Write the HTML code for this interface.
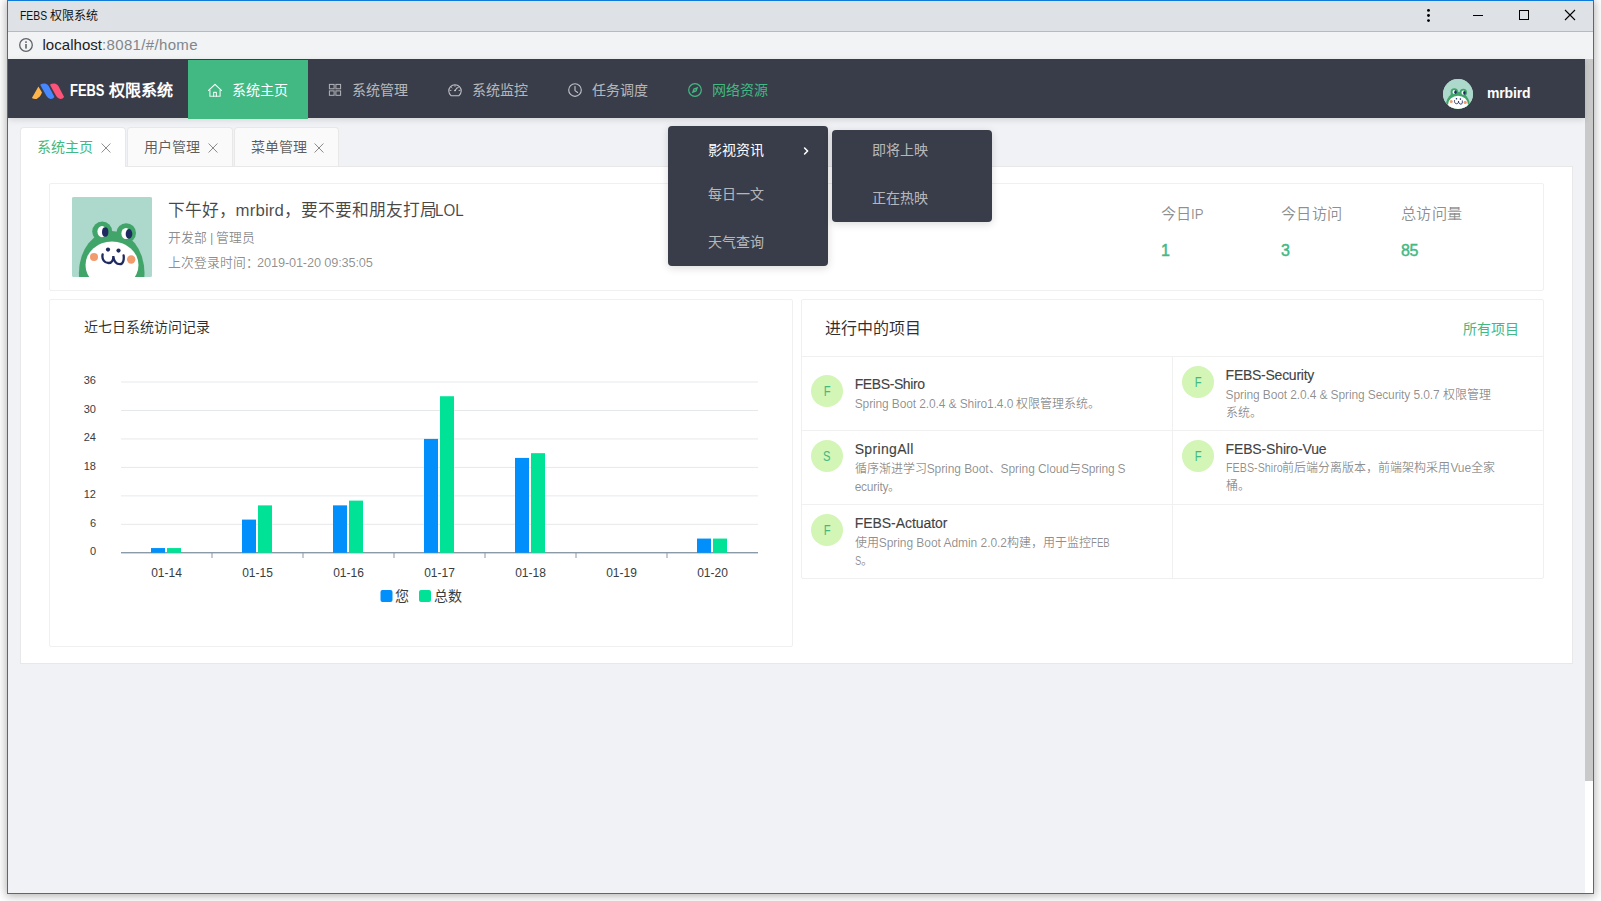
<!DOCTYPE html>
<html lang="zh-CN">
<head>
<meta charset="utf-8">
<title>FEBS 权限系统</title>
<style>
*{box-sizing:border-box;margin:0;padding:0}
html,body{width:1601px;height:901px;overflow:hidden;background:#fff}
body{font-family:"Liberation Sans",sans-serif;position:relative;color:rgba(0,0,0,.65);font-size:14px}
.abs{position:absolute}
#win{position:absolute;left:7px;top:0;width:1587px;height:894px;border:1px solid #0f7ad8;box-shadow:0 1px 9px 1px rgba(0,0,0,.30);background:#f0f2f5;overflow:hidden}
#inner{position:absolute;left:-8px;top:-1px;width:1601px;height:901px}
#titlebar{left:8px;top:1px;width:1585px;height:30px;background:#dee1e6}
#tsep{left:8px;top:31px;width:1585px;height:1px;background:#b9babd}
#addr{left:8px;top:32px;width:1585px;height:27px;background:#f1f3f4}
#nav{left:8px;top:59px;width:1577px;height:59px;background:#393d49;box-shadow:0 2px 6px rgba(0,0,0,.12)}
.ni{position:absolute;top:60px;height:59px;width:120px;color:rgba(255,255,255,.65);font-size:14px;line-height:60px;white-space:nowrap}
.ni>span{position:absolute;left:43.8px;top:0}
.ni.act{background:#42b983;color:#fff}
.ni.open{color:#42b983}
.tab{position:absolute;top:127px;height:40px;background:#fafafa;border:1px solid #e8e8e8;border-bottom:none;border-radius:4px 4px 0 0;font-size:14px;line-height:38px;color:rgba(0,0,0,.65);white-space:nowrap}
.tab>span{position:absolute;left:16px;top:0}
.tab.act{background:#fff;color:#42b983;height:41px}
#panel{left:20px;top:166px;width:1553px;height:498px;background:#fff;border:1px solid #e8e8e8}
.card{position:absolute;background:#fff;border:1px solid #f0f0f0;border-radius:2px}
.tx{position:absolute;white-space:nowrap;line-height:20px}
.cj{display:inline-block;white-space:nowrap;text-align:justify;text-align-last:justify;overflow:visible}
.sx{display:inline-block;white-space:pre}
.sx>span{display:inline-block;transform-origin:0 50%;white-space:pre}
.c45{color:rgba(0,0,0,.45)}
.c85{color:rgba(0,0,0,.82)}
.c70{color:rgba(0,0,0,.72)}
.g{color:#42b983}
.hl{position:absolute;background:#f0f0f0}
.ax{font-size:11px;color:#373d3f;line-height:16px}
.ax.x{font-size:12px}
.pav{position:absolute;width:32px;height:32px;border-radius:50%;background:#d3f5b6;color:#42b983;font-size:14px;line-height:32px;text-align:center}
.pt{font-size:14px;color:rgba(0,0,0,.74);-webkit-text-stroke:.2px rgba(0,0,0,.74)}
.pav span{display:inline-block;transform:scaleX(.8)}
.sb{-webkit-text-stroke:.45px #42b983}
.pd{font-size:12px;color:rgba(0,0,0,.45)}
.dd{position:absolute;background:#393d49;border-radius:4px;box-shadow:0 2px 8px rgba(0,0,0,.15)}
.di{font-size:14px;color:rgba(255,255,255,.65)}
</style>
</head>
<body>
<div id="win"><div id="inner">
<!-- window chrome -->
<div id="titlebar" class="abs"></div>
<div class="tx" style="left:19.5px;top:8px;font-size:12px;line-height:16px;color:#111"><span class="sx" style="width:30.0px"><span style="transform:scaleX(0.865)">FEBS </span></span><span class="cj" style="width:4em">权限系统</span></div>
<div id="tsep" class="abs"></div><div id="addr" class="abs"></div>
<div class="tx" style="left:42.5px;top:35px;font-size:15px;line-height:20px;color:#80868b"><span style="color:#202124"><span style="letter-spacing:0.04px">localhost</span></span><span style="letter-spacing:0.34px">:8081/#/home</span></div>
<svg class="abs" style="left:1420px;top:1px" width="170" height="30" viewBox="1420 1 170 30">
<circle cx="1428.5" cy="10.4" r="1.45" fill="#000"/><circle cx="1428.5" cy="15.5" r="1.45" fill="#000"/><circle cx="1428.5" cy="20.6" r="1.45" fill="#000"/>
<rect x="1473" y="15" width="10" height="1" fill="#000"/>
<rect x="1519.5" y="10.5" width="9" height="9" fill="none" stroke="#000" stroke-width="1"/>
<path d="M1565,10 L1575,20 M1575,10 L1565,20" stroke="#000" stroke-width="1.1" fill="none"/>
</svg>
<svg class="abs" style="left:18px;top:37px" width="16" height="16" viewBox="0 0 16 16"><circle cx="8" cy="8" r="6.3" fill="none" stroke="#5f6368" stroke-width="1.3"/><rect x="7.2" y="4.3" width="1.6" height="1.6" fill="#5f6368"/><rect x="7.2" y="7" width="1.6" height="4.6" fill="#5f6368"/></svg>
<!-- scrollbar -->
<div class="abs" style="left:1585px;top:59px;width:8px;height:834px;background:#fff"></div>
<div class="abs" style="left:1585px;top:59px;width:8px;height:722px;background:#c9c9c9"></div>
<!-- nav -->
<div id="nav" class="abs"></div>
<svg class="abs" style="left:30px;top:80px" width="36" height="22" viewBox="30 80 36 22">
<path d="M38.4,86.4 L42,92.6 Q40.2,97.2 36.6,98.9 Q34,99.5 31.9,98 Z" fill="#ffb54b"/>
<path d="M40.2,84.7 Q42,83.3 45.2,83.5 Q47.6,84 48.7,86 L54.4,96.9 Q53,99 50.6,98.9 Q48,98.5 46.5,96 Z" fill="#4788ff"/>
<path d="M49.9,84.7 Q51.7,83.3 54.9,83.5 Q57.3,84 58.4,86 L64.1,96.9 Q62.7,99 60.3,98.9 Q57.7,98.5 56.2,96 Z" fill="#ff5379"/>
</svg>
<div class="tx" style="left:69.5px;top:80px;font-size:16px;line-height:22px;color:#fff;font-weight:bold"><span class="sx" style="width:34.5px"><span style="transform:scaleX(0.808)">FEBS</span></span><span style="margin-left:4.5px"><span class="cj" style="width:4em">权限系统</span></span></div>
<div class="ni act" style="left:188px"><span><span class="cj" style="width:4em">系统主页</span></span></div>
<div class="ni " style="left:308px"><span><span class="cj" style="width:4em">系统管理</span></span></div>
<div class="ni " style="left:428px"><span><span class="cj" style="width:4em">系统监控</span></span></div>
<div class="ni " style="left:548px"><span><span class="cj" style="width:4em">任务调度</span></span></div>
<div class="ni open" style="left:668px"><span><span class="cj" style="width:4em">网络资源</span></span></div>
<svg class="abs" style="left:208px;top:83px" width="14" height="14" viewBox="0 0 14 14" fill="none" stroke="#fff" stroke-width="1.15" stroke-linecap="round" stroke-linejoin="round"><path d="M.6,7.4 L7,1.4 L13.4,7.4"/><path d="M1.9,7 V13.2 H12.1 V7" stroke-opacity=".85"/><path d="M5.6,13.2 V9.4 H8.4 V13.2" stroke-opacity=".85"/></svg>
<svg class="abs" style="left:328px;top:83px" width="14" height="14" viewBox="0 0 14 14" fill="none" stroke="rgba(255,255,255,.62)" stroke-width="1"><rect x="1.4" y="1.4" width="4.7" height="4.4"/><rect x="7.9" y="1.4" width="4.7" height="4.4"/><rect x="1.4" y="7.9" width="4.7" height="4.4"/><rect x="7.9" y="7.9" width="4.7" height="4.4"/></svg>
<svg class="abs" style="left:448px;top:83px" width="14" height="14" viewBox="0 0 14 14" fill="none" stroke="rgba(255,255,255,.68)" stroke-width="1.1" stroke-linecap="round"><path d="M3,12.7 A6.2,6.2 0 1 1 11,12.7 Z" stroke-linejoin="round"/><path d="M7,7.5 L9.3,4.6"/><path d="M7,2.6 V3.4 M3.4,4.2 L4,4.8 M2.2,7.4 H3 M11,7.4 H11.8 M10.6,4.2 L10,4.8" stroke-width=".9"/><circle cx="7" cy="7.6" r=".8" fill="rgba(255,255,255,.68)" stroke="none"/></svg>
<svg class="abs" style="left:568px;top:83px" width="14" height="14" viewBox="0 0 14 14" fill="none" stroke="rgba(255,255,255,.68)" stroke-width="1.15" stroke-linecap="round" stroke-linejoin="round"><circle cx="7" cy="7" r="6.3"/><path d="M7,3.4 V7.6 L9.6,9.5"/></svg>
<svg class="abs" style="left:688px;top:83px" width="14" height="14" viewBox="0 0 14 14" fill="none" stroke="#42b983" stroke-width="1.2"><circle cx="7" cy="7" r="6.3"/><path d="M10.3,3.7 L8.5,8.5 L3.7,10.3 L5.5,5.5 Z" fill="#42b983" stroke="none"/><circle cx="7" cy="7" r=".7" fill="#393d49" stroke="none"/></svg>
<div class="abs" style="left:1443px;top:79px;width:30px;height:30px;border-radius:50%;overflow:hidden;background:#add8cc"><svg viewBox="0 0 80 80" width="100%" height="100%" style="display:block"><rect width="80" height="80" fill="#add8cc"/><circle cx="30.2" cy="34.6" r="10" fill="#41a56a"/><circle cx="54.2" cy="36" r="9.8" fill="#41a56a"/><ellipse cx="39.7" cy="76" rx="32.8" ry="42" fill="#41a56a"/><ellipse cx="40" cy="68" rx="26.5" ry="23.5" fill="#fff"/><ellipse cx="30" cy="34.6" rx="4.6" ry="5.6" fill="#fff"/><ellipse cx="33.2" cy="35" rx="3.2" ry="4.8" fill="#1f2a60"/><ellipse cx="54" cy="36.5" rx="4.6" ry="5.6" fill="#fff"/><ellipse cx="57" cy="36.9" rx="3.3" ry="4.9" fill="#1f2a60"/><circle cx="22" cy="60" r="4" fill="#f29b6c"/><circle cx="59.2" cy="62.5" r="4.2" fill="#f29b6c"/><circle cx="36" cy="52.6" r="2.1" fill="#1f2a60"/><circle cx="46.5" cy="53.6" r="2.1" fill="#1f2a60"/><path d="M30.6,57.5 C29.6,62.5 32.5,66 36.5,66 C40.3,66 41.5,62.5 41.3,59 C41.8,64 44,67.2 48,67.2 C51.2,67.2 52.2,62.5 51.6,58.3" fill="none" stroke="#1f2a60" stroke-width="2.3" stroke-linecap="round"/></svg></div>
<div class="tx" style="left:1487px;top:83px;font-size:14px;color:#fff;font-weight:bold"><span style="letter-spacing:-0.17px">mrbird</span></div>
<!-- tabs -->
<div class="tab act" style="left:20px;width:106px"><span><span class="cj" style="width:4em">系统主页</span></span></div>
<div class="tab" style="left:127px;width:106px"><span><span class="cj" style="width:4em">用户管理</span></span></div>
<div class="tab" style="left:234px;width:105px"><span><span class="cj" style="width:4em">菜单管理</span></span></div>
<div id="panel" class="abs"></div>
<div class="abs" style="left:21px;top:166px;width:104px;height:1px;background:#fff"></div>
<svg class="abs" style="left:100px;top:142px" width="230" height="12" viewBox="100 142 230 12" stroke="rgba(0,0,0,.45)" stroke-width="1" fill="none"><path d="M101.6,143.5 L110.4,152.5 M110.4,143.5 L101.6,152.5"/><path d="M208.6,143.5 L217.4,152.5 M217.4,143.5 L208.6,152.5"/><path d="M314.6,143.5 L323.4,152.5 M323.4,143.5 L314.6,152.5"/></svg>
<!-- welcome card -->
<div class="card" style="left:49px;top:183px;width:1495px;height:108px"></div>
<div class="abs" style="left:72px;top:197px;width:80px;height:80px;border-radius:2px;background:#add8cc;overflow:hidden"><svg viewBox="0 0 80 80" width="100%" height="100%" style="display:block"><rect width="80" height="80" fill="#add8cc"/><circle cx="30.2" cy="34.6" r="10" fill="#41a56a"/><circle cx="54.2" cy="36" r="9.8" fill="#41a56a"/><ellipse cx="39.7" cy="76" rx="32.8" ry="42" fill="#41a56a"/><ellipse cx="40" cy="68" rx="26.5" ry="23.5" fill="#fff"/><ellipse cx="30" cy="34.6" rx="4.6" ry="5.6" fill="#fff"/><ellipse cx="33.2" cy="35" rx="3.2" ry="4.8" fill="#1f2a60"/><ellipse cx="54" cy="36.5" rx="4.6" ry="5.6" fill="#fff"/><ellipse cx="57" cy="36.9" rx="3.3" ry="4.9" fill="#1f2a60"/><circle cx="22" cy="60" r="4" fill="#f29b6c"/><circle cx="59.2" cy="62.5" r="4.2" fill="#f29b6c"/><circle cx="36" cy="52.6" r="2.1" fill="#1f2a60"/><circle cx="46.5" cy="53.6" r="2.1" fill="#1f2a60"/><path d="M30.6,57.5 C29.6,62.5 32.5,66 36.5,66 C40.3,66 41.5,62.5 41.3,59 C41.8,64 44,67.2 48,67.2 C51.2,67.2 52.2,62.5 51.6,58.3" fill="none" stroke="#1f2a60" stroke-width="2.3" stroke-linecap="round"/></svg></div>
<div class="tx c70" style="left:168.3px;top:199.1px;font-size:16.8px;line-height:24px"><span class="cj" style="width:4em">下午好，</span><span style="letter-spacing:0.17px">mrbird</span><span class="cj" style="width:9em">，要不要和朋友打局</span><span class="sx" style="width:28.6px"><span style="transform:scaleX(0.901)">LOL</span></span></div>
<div class="tx c45" style="left:168.3px;top:228px;font-size:12.8px"><span class="cj" style="width:3em">开发部</span><span style="letter-spacing:-0.25px"> | </span><span class="cj" style="width:3em">管理员</span></div>
<div class="tx c45" style="left:168.3px;top:253px;font-size:12.8px"><span class="cj" style="width:7em">上次登录时间：</span><span style="margin-left:-.8px"><span style="letter-spacing:-0.17px">2019-01-20 09:35:05</span></span></div>
<div class="tx c45" style="left:1161px;top:204px;font-size:15.2px"><span class="cj" style="width:2em">今日</span><span class="sx" style="width:12.6px"><span style="transform:scaleX(0.877)">IP</span></span></div>
<div class="tx c45" style="left:1281px;top:204px;font-size:15.2px"><span class="cj" style="width:4em">今日访问</span></div>
<div class="tx c45" style="left:1401px;top:204px;font-size:15.2px"><span class="cj" style="width:4em">总访问量</span></div>
<div class="tx g sb" style="left:1161px;top:240.5px;font-size:16px">1</div>
<div class="tx g sb" style="left:1281px;top:240.5px;font-size:16px">3</div>
<div class="tx g sb" style="left:1401px;top:240.5px;font-size:16px"><span style="letter-spacing:-0.30px">85</span></div>
<!-- chart card -->
<div class="card" style="left:49px;top:299px;width:744px;height:348px"></div>
<div class="tx c85" style="left:84px;top:317px;font-size:14px"><span class="cj" style="width:9em">近七日系统访问记录</span></div>
<svg class="abs" style="left:50px;top:300px" width="742" height="346" viewBox="50 300 742 346"><rect x="121" y="381.50" width="637" height="1" fill="#e6e9eb"/><rect x="121" y="409.97" width="637" height="1" fill="#e6e9eb"/><rect x="121" y="438.43" width="637" height="1" fill="#e6e9eb"/><rect x="121" y="466.90" width="637" height="1" fill="#e6e9eb"/><rect x="121" y="495.37" width="637" height="1" fill="#e6e9eb"/><rect x="121" y="523.83" width="637" height="1" fill="#e6e9eb"/><rect x="121" y="552" width="637" height="1.4" fill="#8a9aa6"/><rect x="211.5" y="553" width="1" height="5" fill="#8a9aa6"/><rect x="302.5" y="553" width="1" height="5" fill="#8a9aa6"/><rect x="393.5" y="553" width="1" height="5" fill="#8a9aa6"/><rect x="484.5" y="553" width="1" height="5" fill="#8a9aa6"/><rect x="575.5" y="553" width="1" height="5" fill="#8a9aa6"/><rect x="666.5" y="553" width="1" height="5" fill="#8a9aa6"/><rect x="151" y="548.06" width="14" height="4.74" fill="#008ffb"/><rect x="167" y="548.06" width="14" height="4.74" fill="#00e396"/><rect x="242" y="519.59" width="14" height="33.21" fill="#008ffb"/><rect x="258" y="505.36" width="14" height="47.44" fill="#00e396"/><rect x="333" y="505.36" width="14" height="47.44" fill="#008ffb"/><rect x="349" y="500.61" width="14" height="52.19" fill="#00e396"/><rect x="424" y="438.93" width="14" height="113.87" fill="#008ffb"/><rect x="440" y="396.23" width="14" height="156.57" fill="#00e396"/><rect x="515" y="457.91" width="14" height="94.89" fill="#008ffb"/><rect x="531" y="453.17" width="14" height="99.63" fill="#00e396"/><rect x="697" y="538.57" width="14" height="14.23" fill="#008ffb"/><rect x="713" y="538.57" width="14" height="14.23" fill="#00e396"/><rect x="380.5" y="590" width="12" height="12" rx="2" fill="#008ffb"/><rect x="419" y="590" width="12" height="12" rx="2" fill="#00e396"/></svg>
<div class="tx ax" style="left:60px;top:372.3px;width:36px;text-align:right">36</div>
<div class="tx ax" style="left:60px;top:400.8px;width:36px;text-align:right">30</div>
<div class="tx ax" style="left:60px;top:429.2px;width:36px;text-align:right">24</div>
<div class="tx ax" style="left:60px;top:457.7px;width:36px;text-align:right">18</div>
<div class="tx ax" style="left:60px;top:486.2px;width:36px;text-align:right">12</div>
<div class="tx ax" style="left:60px;top:514.6px;width:36px;text-align:right">6</div>
<div class="tx ax" style="left:60px;top:543.1px;width:36px;text-align:right">0</div>
<div class="tx ax x" style="left:136.5px;top:564.5px;width:60px;text-align:center">01-14</div>
<div class="tx ax x" style="left:227.5px;top:564.5px;width:60px;text-align:center">01-15</div>
<div class="tx ax x" style="left:318.5px;top:564.5px;width:60px;text-align:center">01-16</div>
<div class="tx ax x" style="left:409.5px;top:564.5px;width:60px;text-align:center">01-17</div>
<div class="tx ax x" style="left:500.5px;top:564.5px;width:60px;text-align:center">01-18</div>
<div class="tx ax x" style="left:591.5px;top:564.5px;width:60px;text-align:center">01-19</div>
<div class="tx ax x" style="left:682.5px;top:564.5px;width:60px;text-align:center">01-20</div>
<div class="tx" style="left:395px;top:585.5px;font-size:14px;color:#373d3f"><span class="cj" style="width:1em">您</span></div>
<div class="tx" style="left:434px;top:585.5px;font-size:14px;color:#373d3f"><span class="cj" style="width:2em">总数</span></div>
<!-- projects card -->
<div class="card" style="left:801px;top:299px;width:743px;height:280px"></div>
<div class="hl" style="left:802px;top:356px;width:741px;height:1px"></div>
<div class="hl" style="left:802px;top:430px;width:741px;height:1px"></div>
<div class="hl" style="left:802px;top:504px;width:741px;height:1px"></div>
<div class="hl" style="left:1172px;top:357px;width:1px;height:221px"></div>
<div class="tx c85" style="left:825px;top:317px;font-size:16px;line-height:24px"><span class="cj" style="width:6em">进行中的项目</span></div>
<div class="tx g" style="left:1463px;top:319px;font-size:14px"><span class="cj" style="width:4em">所有项目</span></div>
<div class="pav" style="left:811px;top:375px"><span>F</span></div>
<div class="tx pt" style="left:854.7px;top:374px"><span style="letter-spacing:-0.40px">FEBS-Shiro</span></div>
<div class="tx pd" style="left:854.7px;top:393.5px"><span style="letter-spacing:-0.12px">Spring Boot 2.0.4 &amp; Shiro1.4.0 </span><span class="cj" style="width:7em">权限管理系统。</span></div>
<div class="pav" style="left:811px;top:440px"><span>S</span></div>
<div class="tx pt" style="left:854.7px;top:439px"><span style="letter-spacing:0.33px">SpringAll</span></div>
<div class="tx pd" style="left:854.7px;top:459px"><span class="cj" style="width:6em">循序渐进学习</span><span style="letter-spacing:-0.08px">Spring Boot</span><span class="cj" style="width:1em">、</span><span style="letter-spacing:-0.08px">Spring Cloud</span><span class="cj" style="width:1em">与</span><span style="letter-spacing:-0.20px">Spring S</span></div>
<div class="tx pd" style="left:854.7px;top:477.3px"><span style="letter-spacing:-0.25px">ecurity</span><span class="cj" style="width:1em">。</span></div>
<div class="pav" style="left:811px;top:514px"><span>F</span></div>
<div class="tx pt" style="left:854.7px;top:513px"><span style="letter-spacing:-0.05px">FEBS-Actuator</span></div>
<div class="tx pd" style="left:854.7px;top:532.8px"><span class="cj" style="width:2em">使用</span><span style="letter-spacing:-0.05px">Spring Boot Admin 2.0.2</span><span class="cj" style="width:7em">构建，用于监控</span><span class="sx" style="width:18.8px"><span style="transform:scaleX(0.805)">FEB</span></span></div>
<div class="tx pd" style="left:854.7px;top:551px"><span class="sx" style="width:6.3px"><span style="transform:scaleX(0.786)">S</span></span><span class="cj" style="width:1em">。</span></div>
<div class="pav" style="left:1182px;top:366px"><span>F</span></div>
<div class="tx pt" style="left:1225.6px;top:365px"><span style="letter-spacing:-0.26px">FEBS-Security</span></div>
<div class="tx pd" style="left:1225.6px;top:384.8px"><span style="letter-spacing:-0.12px">Spring Boot 2.0.4 &amp; Spring Security 5.0.7 </span><span class="cj" style="width:4em">权限管理</span></div>
<div class="tx pd" style="left:1225.6px;top:402.7px"><span class="cj" style="width:3em">系统。</span></div>
<div class="pav" style="left:1182px;top:440px"><span>F</span></div>
<div class="tx pt" style="left:1225.6px;top:439px"><span style="letter-spacing:-0.15px">FEBS-Shiro-Vue</span></div>
<div class="tx pd" style="left:1225.6px;top:458.4px"><span class="sx" style="width:56.8px"><span style="transform:scaleX(0.896)">FEBS-Shiro</span></span><span class="cj" style="width:14em">前后端分离版本，前端架构采用</span><span style="letter-spacing:-0.10px">Vue</span><span class="cj" style="width:2em">全家</span></div>
<div class="tx pd" style="left:1225.6px;top:476.3px"><span class="cj" style="width:2em">桶。</span></div>
<!-- dropdown menus -->
<div class="dd" style="left:668px;top:126px;width:160px;height:140px"></div>
<div class="dd" style="left:832px;top:130px;width:160px;height:92px"></div>
<div class="tx di" style="left:708px;top:140px;color:#fff"><span class="cj" style="width:4em">影视资讯</span></div>
<svg class="abs" style="left:801px;top:145px" width="10" height="12" viewBox="0 0 10 12" fill="none" stroke="#fff" stroke-width="1.6" stroke-linecap="round" stroke-linejoin="round"><path d="M3.6,3 L6.6,6 L3.6,9"/></svg>
<div class="tx di" style="left:708px;top:184px"><span class="cj" style="width:4em">每日一文</span></div>
<div class="tx di" style="left:708px;top:232px"><span class="cj" style="width:4em">天气查询</span></div>
<div class="tx di" style="left:872px;top:140px"><span class="cj" style="width:4em">即将上映</span></div>
<div class="tx di" style="left:872px;top:188px"><span class="cj" style="width:4em">正在热映</span></div>
</div></div>
</body>
</html>
